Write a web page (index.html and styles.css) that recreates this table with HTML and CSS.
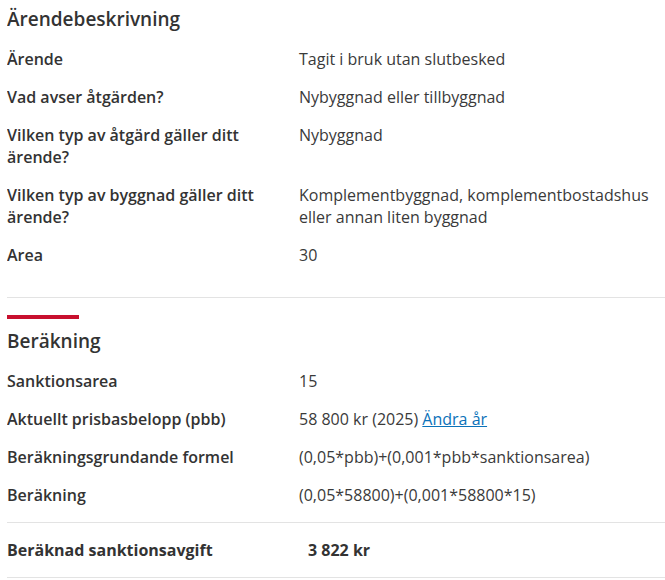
FILE: index.html
```html
<!DOCTYPE html>
<html lang="sv">
<head>
    <meta charset="UTF-8">
    <meta name="viewport" content="width=device-width, initial-scale=1.0">
    <title>Sanktionsavgift - Beräkning</title>
    <link rel="stylesheet" href="styles.css">
</head>
<body>
    <section class="block">
        <h2 class="section-title">Ärendebeskrivning</h2>
        <dl class="facts">
            <div class="fact-row">
                <dt>Ärende</dt>
                <dd>Tagit i bruk utan slutbesked</dd>
            </div>
            <div class="fact-row">
                <dt>Vad avser åtgärden?</dt>
                <dd>Nybyggnad eller tillbyggnad</dd>
            </div>
            <div class="fact-row">
                <dt>Vilken typ av åtgärd gäller ditt ärende?</dt>
                <dd>Nybyggnad</dd>
            </div>
            <div class="fact-row">
                <dt>Vilken typ av byggnad gäller ditt ärende?</dt>
                <dd>Komplementbyggnad, komplementbostadshus eller annan liten byggnad</dd>
            </div>
            <div class="fact-row">
                <dt>Area</dt>
                <dd>30</dd>
            </div>
        </dl>
    </section>

    <section class="block block-calc">
        <div class="accent"></div>
        <h2 class="section-title">Beräkning</h2>
        <dl class="facts">
            <div class="fact-row">
                <dt>Sanktionsarea</dt>
                <dd>15</dd>
            </div>
            <div class="fact-row">
                <dt>Aktuellt prisbasbelopp (pbb)</dt>
                <dd>58 800 kr (2025) <a href="#" class="link">Ändra år</a></dd>
            </div>
            <div class="fact-row">
                <dt>Beräkningsgrundande formel</dt>
                <dd>(0,05*pbb)+(0,001*pbb*sanktionsarea)</dd>
            </div>
            <div class="fact-row">
                <dt>Beräkning</dt>
                <dd>(0,05*58800)+(0,001*58800*15)</dd>
            </div>
        </dl>
    </section>

    <section class="block block-total">
        <dl class="facts">
            <div class="fact-row total">
                <dt>Beräknad sanktionsavgift</dt>
                <dd>3 822 kr</dd>
            </div>
        </dl>
    </section>
</body>
</html>
```

FILE: styles.css
```css
body {
    font-family: 'Open Sans', 'Liberation Sans', sans-serif;
    font-size: 16px;
    line-height: 22px;
    color: #333;
    background-color: #fff;
    margin: 0 0 0 7px;
    padding-top: 5px;
}
.block {
    padding-bottom: 31px;
    border-bottom: 1px solid #e3e3e3;
}
.block-calc {
    padding-top: 17px;
    padding-bottom: 16px;
}
.block-total {
    padding: 16px 0;
}
.accent {
    width: 72px;
    height: 4px;
    background-color: #c8102e;
    margin-bottom: 8px;
}
.section-title {
    font-size: 19px;
    line-height: 28px;
    font-weight: 600;
    color: #333;
    margin: 0 0 15px;
}
.facts {
    margin: 0;
    display: flex;
    flex-direction: column;
    gap: 16px;
}
.fact-row {
    display: grid;
    grid-template-columns: 292px 1fr;
}
.fact-row dt {
    font-weight: 600;
    padding-right: 14px;
}
.fact-row dd {
    margin: 0;
    color: #3a3a3a;
}
.total dt {
    font-weight: 700;
}
.total dd {
    font-weight: 700;
    color: #333;
    padding-left: 9px;
}
.link {
    color: #0b72b9;
    text-decoration: underline;
}
```
